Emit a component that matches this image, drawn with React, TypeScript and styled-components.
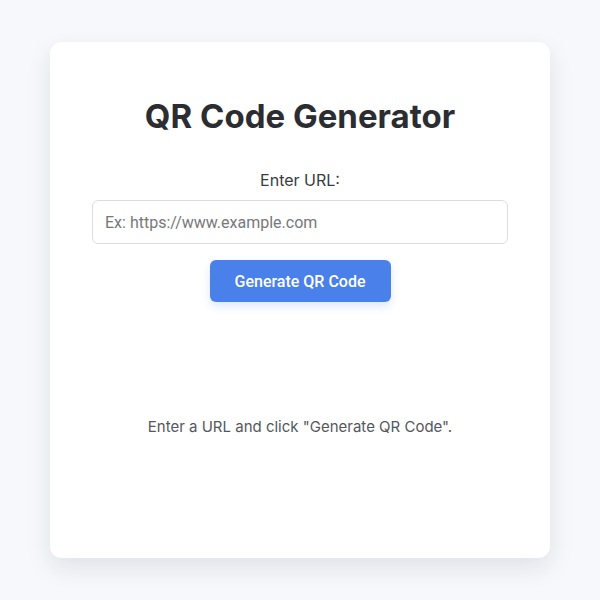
import { createGlobalStyle, styled } from 'styled-components';

const GlobalStyle = createGlobalStyle`
  * { box-sizing: border-box; }
  body {
    margin: 0;
    background: #f6f8fb;
    font-family: Inter, "Noto Sans", sans-serif;
  }
`;

const Page = styled.div`
  min-height: 600px;
  padding-top: 42px;
  display: flex;
  justify-content: center;
  align-items: flex-start;
`;

const Card = styled.div`
  width: 500px;
  height: 516px;
  background: #ffffff;
  border-radius: 12px;
  box-shadow: 0 10px 24px rgba(30, 40, 60, 0.1);
  padding: 54px 42px 0;
  display: flex;
  flex-direction: column;
  align-items: center;
`;

const Title = styled.h1`
  margin: 0;
  font-size: 33px;
  font-weight: 650;
  color: #2b2d31;
  line-height: 40px;
`;

const Label = styled.label`
  margin-top: 34px;
  font-size: 16px;
  color: #3a3c40;
  line-height: 20px;
`;

const Input = styled.input`
  margin-top: 10px;
  width: 100%;
  height: 44px;
  border: 1px solid #dcdde0;
  border-radius: 6px;
  padding: 0 12px;
  font-family: Roboto, sans-serif;
  font-size: 16px;
  color: #333;
  outline: none;

  &::placeholder {
    color: #787878;
  }
`;

const Button = styled.button`
  margin-top: 16px;
  width: 181px;
  height: 42px;
  border: none;
  border-radius: 6px;
  background: #4a80ea;
  color: #ffffff;
  font-family: Roboto, sans-serif;
  font-size: 16px;
  font-weight: 500;
  box-shadow: 0 4px 10px rgba(74, 128, 234, 0.2);
  cursor: pointer;
`;

const Hint = styled.p`
  margin: 115px 0 0;
  font-size: 15px;
  color: #55575c;
  line-height: 20px;
`;

export default function App() {
  return (
    <>
      <GlobalStyle />
      <Page>
        <Card>
          <Title>QR Code Generator</Title>
          <Label htmlFor="url">Enter URL:</Label>
          <Input id="url" type="text" placeholder="Ex: https://www.example.com" />
          <Button>Generate QR Code</Button>
          <Hint>Enter a URL and click "Generate QR Code".</Hint>
        </Card>
      </Page>
    </>
  );
}
